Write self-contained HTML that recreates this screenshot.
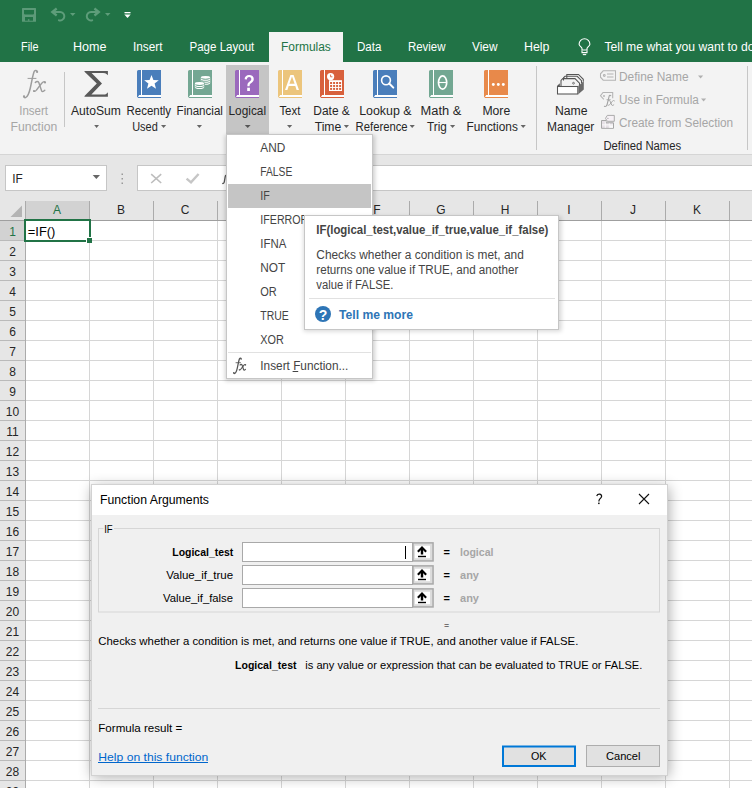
<!DOCTYPE html>
<html><head><meta charset="utf-8"><title>Excel</title>
<style>html,body{margin:0;padding:0;width:752px;height:788px;overflow:hidden;background:#fff}svg{display:block}text{white-space:pre}</style>
</head><body>
<svg width="752" height="788" viewBox="0 0 752 788" font-family='"Liberation Sans", sans-serif'>
<rect x="0" y="0" width="752" height="788" fill="#ffffff" />
<rect x="0" y="0" width="752" height="62" fill="#217346" />
<rect x="22" y="8" width="14" height="13.7" rx="0.5" fill="#5c9a78"/>
<path d="M24 10H34V13.8L33.2 14.6H24.8L24 13.8Z" fill="#217346"/>
<rect x="25" y="17" width="8" height="3.7" fill="#217346"/>
<rect x="27.9" y="19.2" width="1.5" height="1.6" fill="#5c9a78"/>
<g fill="none" stroke="#5e9d7a" stroke-width="2"><path d="M53 11.9H60A4.3 4.3 0 1 1 58.9 20.35" stroke-linecap="round"/><path d="M56.7 8.5L52.3 12L56.7 15.5" stroke-width="2.3"/></g>
<path d="M70 13H75.5L72.75 16Z" fill="#5e9d7a"/>
<g fill="none" stroke="#5e9d7a" stroke-width="2"><path d="M98.1 11.9H91.1A4.3 4.3 0 1 0 92.2 20.35" stroke-linecap="round"/><path d="M94.4 8.5L98.8 12L94.4 15.5" stroke-width="2.3"/></g>
<path d="M105 13H110.5L107.75 16Z" fill="#5e9d7a"/>
<rect x="124.5" y="12" width="6" height="1.3" fill="#ffffff" />
<path d="M124.3 14.5H130.7L127.5 18Z" fill="#ffffff"/>
<rect x="269" y="32" width="74" height="30" fill="#f3f3f3" />
<text x="21" y="51" font-size="12" font-weight="normal" fill="#ffffff" textLength="17.5" lengthAdjust="spacingAndGlyphs" >File</text>
<text x="73" y="51" font-size="12" font-weight="normal" fill="#ffffff" textLength="33.5" lengthAdjust="spacingAndGlyphs" >Home</text>
<text x="133" y="51" font-size="12" font-weight="normal" fill="#ffffff" textLength="29.5" lengthAdjust="spacingAndGlyphs" >Insert</text>
<text x="189.5" y="51" font-size="12" font-weight="normal" fill="#ffffff" textLength="64.8" lengthAdjust="spacingAndGlyphs" >Page Layout</text>
<text x="357" y="51" font-size="12" font-weight="normal" fill="#ffffff" textLength="24.5" lengthAdjust="spacingAndGlyphs" >Data</text>
<text x="408" y="51" font-size="12" font-weight="normal" fill="#ffffff" textLength="37.5" lengthAdjust="spacingAndGlyphs" >Review</text>
<text x="472" y="51" font-size="12" font-weight="normal" fill="#ffffff" textLength="25.5" lengthAdjust="spacingAndGlyphs" >View</text>
<text x="524" y="51" font-size="12" font-weight="normal" fill="#ffffff" textLength="25.5" lengthAdjust="spacingAndGlyphs" >Help</text>
<text x="281" y="51" font-size="12" font-weight="normal" fill="#217346" textLength="49.8" lengthAdjust="spacingAndGlyphs" >Formulas</text>
<g fill="none" stroke="#ffffff" stroke-width="1.1"><path d="M582 50V48.6C582 47 579.1 46.2 579.1 44.2A5.4 5.4 0 1 1 589.9 44.2C589.9 46.2 587 47 587 48.6V50Z"/><path d="M582 50.5V52.6H587V50.5"/><path d="M582.8 54.6H586.2"/></g>
<text x="604.5" y="51" font-size="12" font-weight="normal" fill="#ffffff" textLength="150" lengthAdjust="spacingAndGlyphs" >Tell me what you want to do</text>
<rect x="0" y="62" width="752" height="92" fill="#f3f3f3" />
<rect x="0" y="154" width="752" height="1" fill="#d5d5d5" />
<rect x="0" y="155" width="752" height="46" fill="#e6e6e6" />
<g transform="translate(23,70) scale(1)" fill="none" stroke="#9c9c9c" stroke-linecap="round"><path d="M14.2 1.4C13.8 0.2 12.2 0 11.4 1.2C10 3.5 8.5 13 7.3 18C6.3 22.5 5 26.8 2.5 27.6C1.5 27.9 0.8 27.2 1 26.5" stroke-width="1.5"/><path d="M5 8.4H13" stroke-width="1.0"/><path d="M12.3 12.5C13.5 11.2 15 11 15.8 12.5L18.5 20.5C19 22 20.2 22 21.8 20.3" stroke-width="1.4"/><path d="M22.2 12C21 11.2 19.8 12 18.5 13.5L13.5 20C12.5 21.5 11.8 21.8 10.9 21.2" stroke-width="1.3"/><circle cx="14.1" cy="1.9" r="1.1" fill="#9c9c9c" stroke="none"/><circle cx="1" cy="26.3" r="1.1" fill="#9c9c9c" stroke="none"/><circle cx="22" cy="12.5" r="1.1" fill="#9c9c9c" stroke="none"/><circle cx="11" cy="21" r="1.0" fill="#9c9c9c" stroke="none"/></g>
<text x="19.2" y="115" font-size="12" font-weight="normal" fill="#a6a6a6" textLength="28.8" lengthAdjust="spacingAndGlyphs" >Insert</text>
<text x="10.5" y="131" font-size="12" font-weight="normal" fill="#a6a6a6" textLength="46.8" lengthAdjust="spacingAndGlyphs" >Function</text>
<rect x="64" y="72" width="1" height="55" fill="#c6c6c6" />
<path d="M84.5 71.1H107.9V75.3L106.8 74.2Q105.5 73.1 103 73.1H91.6L102 83.5L91.4 94.6H103Q105.5 94.6 106.8 93.4L107.9 92.3V96.7H84.5V96L96.8 83.5L84.5 71.8Z" fill="#595959"/>
<text x="71" y="115" font-size="12" font-weight="normal" fill="#262626" textLength="49.8" lengthAdjust="spacingAndGlyphs" >AutoSum</text>
<path d="M94.2 125H99L96.6 128Z" fill="#666"/>
<g transform="translate(137,70)"><path d="M1.5 0H24V28H1.2L0 26.8V1.5A1.5 1.5 0 0 1 1.5 0Z" fill="#4a7ebb"/><rect x="4" y="0" width="1" height="25.5" fill="#fff"/><path d="M2.2 25H24V27H0.9Z" fill="#fff"/><path d="M14.50 4.90L16.41 9.97L21.82 10.22L17.59 13.60L19.03 18.83L14.50 15.85L9.97 18.83L11.41 13.60L7.18 10.22L12.59 9.97Z" fill="#fff"/></g>
<text x="126.5" y="115" font-size="12" font-weight="normal" fill="#262626" textLength="44.6" lengthAdjust="spacingAndGlyphs" >Recently</text>
<text x="132.2" y="131" font-size="12" font-weight="normal" fill="#262626" textLength="25.6" lengthAdjust="spacingAndGlyphs" >Used</text>
<path d="M161 125H166.2L163.6 128Z" fill="#666"/>
<g transform="translate(188,70)"><path d="M1.5 0H24V28H1.2L0 26.8V1.5A1.5 1.5 0 0 1 1.5 0Z" fill="#74a793"/><rect x="4" y="0" width="1" height="25.5" fill="#fff"/><path d="M2.2 25H24V27H0.9Z" fill="#fff"/><rect x="12.1" y="5.1" width="10.8" height="10.6" rx="3" fill="#74a793"/><path d="M13.4 13.049999999999999A4.1 1.25 0 0 0 21.6 13.049999999999999" fill="none" stroke="#fff" stroke-width="1.1"/><path d="M13.4 11.049999999999999A4.1 1.25 0 0 0 21.6 11.049999999999999" fill="none" stroke="#fff" stroke-width="1.1"/><path d="M13.4 9.049999999999999A4.1 1.25 0 0 0 21.6 9.049999999999999" fill="none" stroke="#fff" stroke-width="1.1"/><ellipse cx="17.5" cy="7.35" rx="4.6" ry="1.45" fill="#fff"/><path d="M13.1 7.5V13.15M21.9 7.5V13.15" stroke="#fff" stroke-width="0.7" opacity="0.6"/><rect x="6.1" y="11.299999999999999" width="10.8" height="8.6" rx="3" fill="#74a793"/><path d="M7.4 17.249999999999996A4.1 1.25 0 0 0 15.6 17.249999999999996" fill="none" stroke="#fff" stroke-width="1.1"/><path d="M7.4 15.249999999999998A4.1 1.25 0 0 0 15.6 15.249999999999998" fill="none" stroke="#fff" stroke-width="1.1"/><ellipse cx="11.5" cy="13.549999999999999" rx="4.6" ry="1.45" fill="#fff"/><path d="M7.1 13.7V17.349999999999998M15.9 13.7V17.349999999999998" stroke="#fff" stroke-width="0.7" opacity="0.6"/></g>
<text x="176.6" y="115" font-size="12" font-weight="normal" fill="#262626" textLength="46.3" lengthAdjust="spacingAndGlyphs" >Financial</text>
<path d="M196.8 125H202L199.4 128Z" fill="#666"/>
<rect x="226" y="65" width="43" height="69" fill="#c5c5c5" />
<g transform="translate(235,70)"><path d="M1.5 0H24V28H1.2L0 26.8V1.5A1.5 1.5 0 0 1 1.5 0Z" fill="#9b69bd"/><rect x="4" y="0" width="1" height="25.5" fill="#fff"/><path d="M2.2 25H24V27H0.9Z" fill="#fff"/><path d="M9.6 9.3C9.6 6.6 11.6 5 14.1 5C16.8 5 18.8 6.6 18.8 9C18.8 11.2 17.4 12.2 16 13.2C15 13.9 14.6 14.6 14.6 15.9V16.2H12.4V15.6C12.4 13.8 13 12.8 14.4 11.8C15.6 10.9 16.3 10.3 16.3 9.1C16.3 7.9 15.4 7.1 14.1 7.1C12.7 7.1 11.9 8 11.9 9.5Z" fill="#fff"/><rect x="12.2" y="17.7" width="2.7" height="3.3" fill="#fff"/></g>
<text x="228.5" y="115" font-size="12" font-weight="normal" fill="#262626" textLength="37.6" lengthAdjust="spacingAndGlyphs" >Logical</text>
<path d="M244.8 125H250.6L247.7 128Z" fill="#555"/>
<g transform="translate(278,70)"><path d="M1.5 0H24V28H1.2L0 26.8V1.5A1.5 1.5 0 0 1 1.5 0Z" fill="#ecc57c"/><rect x="4" y="0" width="1" height="25.5" fill="#fff"/><path d="M2.2 25H24V27H0.9Z" fill="#fff"/><path d="M7 20L12.4 5H15.6L21 20H18.6L17.3 16H10.7L9.4 20ZM11.4 13.7H16.6L14 6.6Z" fill="#fff" fill-rule="evenodd"/></g>
<text x="279.4" y="115" font-size="12" font-weight="normal" fill="#262626" textLength="21" lengthAdjust="spacingAndGlyphs" >Text</text>
<path d="M287 125H292.2L289.6 128Z" fill="#666"/>
<g transform="translate(320,70)"><path d="M1.5 0H24V28H1.2L0 26.8V1.5A1.5 1.5 0 0 1 1.5 0Z" fill="#d8603c"/><rect x="4" y="0" width="1" height="25.5" fill="#fff"/><path d="M2.2 25H24V27H0.9Z" fill="#fff"/><circle cx="10.6" cy="6.6" r="3.6" fill="#fff"/><path d="M10.6 4.6V6.8H12.4" stroke="#d8603c" stroke-width="0.9" fill="none"/><rect x="9" y="10.2" width="13" height="10.8" fill="#fff"/><rect x="10.1" y="12.0" width="2" height="2" fill="#d8603c"/><rect x="10.1" y="14.95" width="2" height="2" fill="#d8603c"/><rect x="10.1" y="17.9" width="2" height="2" fill="#d8603c"/><rect x="13.1" y="12.0" width="2" height="2" fill="#d8603c"/><rect x="13.1" y="14.95" width="2" height="2" fill="#d8603c"/><rect x="13.1" y="17.9" width="2" height="2" fill="#d8603c"/><rect x="16.1" y="12.0" width="2" height="2" fill="#d8603c"/><rect x="16.1" y="14.95" width="2" height="2" fill="#d8603c"/><rect x="16.1" y="17.9" width="2" height="2" fill="#d8603c"/><rect x="19.1" y="12.0" width="2" height="2" fill="#d8603c"/><rect x="19.1" y="14.95" width="2" height="2" fill="#d8603c"/><rect x="19.1" y="17.9" width="2" height="2" fill="#d8603c"/></g>
<text x="313.3" y="115" font-size="12" font-weight="normal" fill="#262626" textLength="36.5" lengthAdjust="spacingAndGlyphs" >Date &amp;</text>
<text x="314.7" y="131" font-size="12" font-weight="normal" fill="#262626" textLength="26.6" lengthAdjust="spacingAndGlyphs" >Time</text>
<path d="M343.8 125H349L346.4 128Z" fill="#666"/>
<g transform="translate(373,70)"><path d="M1.5 0H24V28H1.2L0 26.8V1.5A1.5 1.5 0 0 1 1.5 0Z" fill="#4a7ebb"/><rect x="4" y="0" width="1" height="25.5" fill="#fff"/><path d="M2.2 25H24V27H0.9Z" fill="#fff"/><circle cx="13" cy="10.3" r="4.4" fill="none" stroke="#fff" stroke-width="1.6"/><path d="M16.2 13.5L20.3 17.6" stroke="#fff" stroke-width="2" stroke-linecap="round"/></g>
<text x="359.2" y="115" font-size="12" font-weight="normal" fill="#262626" textLength="52.4" lengthAdjust="spacingAndGlyphs" >Lookup &amp;</text>
<text x="355.6" y="131" font-size="12" font-weight="normal" fill="#262626" textLength="52" lengthAdjust="spacingAndGlyphs" >Reference</text>
<path d="M409.6 125H414.8L412.20000000000005 128Z" fill="#666"/>
<g transform="translate(429,70)"><path d="M1.5 0H24V28H1.2L0 26.8V1.5A1.5 1.5 0 0 1 1.5 0Z" fill="#72a792"/><rect x="4" y="0" width="1" height="25.5" fill="#fff"/><path d="M2.2 25H24V27H0.9Z" fill="#fff"/><ellipse cx="13.6" cy="12.5" rx="4.1" ry="6.6" fill="none" stroke="#fff" stroke-width="1.7"/><path d="M9.8 12.5H17.4" stroke="#fff" stroke-width="1.1"/></g>
<text x="420.5" y="115" font-size="12" font-weight="normal" fill="#262626" textLength="40.8" lengthAdjust="spacingAndGlyphs" >Math &amp;</text>
<text x="427.1" y="131" font-size="12" font-weight="normal" fill="#262626" textLength="19.8" lengthAdjust="spacingAndGlyphs" >Trig</text>
<path d="M450 125H455.2L452.6 128Z" fill="#666"/>
<g transform="translate(484,70)"><path d="M1.5 0H24V28H1.2L0 26.8V1.5A1.5 1.5 0 0 1 1.5 0Z" fill="#e8894a"/><rect x="4" y="0" width="1" height="25.5" fill="#fff"/><path d="M2.2 25H24V27H0.9Z" fill="#fff"/><circle cx="9.3" cy="14.5" r="1.45" fill="#fff"/><circle cx="14.3" cy="14.5" r="1.45" fill="#fff"/><circle cx="19.3" cy="14.5" r="1.45" fill="#fff"/></g>
<text x="482.4" y="115" font-size="12" font-weight="normal" fill="#262626" textLength="27.8" lengthAdjust="spacingAndGlyphs" >More</text>
<text x="466.5" y="131" font-size="12" font-weight="normal" fill="#262626" textLength="51.3" lengthAdjust="spacingAndGlyphs" >Functions</text>
<path d="M520.6 125H525.8L523.2 128Z" fill="#666"/>
<rect x="536" y="66" width="1" height="84" fill="#c6c6c6" />
<g fill="none" stroke="#555" stroke-width="1.05"><path d="M566.8 78V74.5H578.5L583.3 79.3V81.5"/><path d="M563.5 80.5V77.8L565 76.3H577.2L581.5 80.6V83"/><path d="M561 86V80.5L562.8 78.6H575L579.5 83.1V86"/></g><rect x="557.5" y="86.5" width="20.3" height="7.5" fill="#fff" stroke="#555" stroke-width="1.05"/><path d="M578.3 86L583.8 81V89.5L578.3 94.3Z" fill="#6a6a6a"/><path d="M557 86L559.8 83.2V86Z" fill="#555"/><circle cx="573.5" cy="83.2" r="0.9" fill="none" stroke="#555" stroke-width="0.8"/>
<text x="555" y="115" font-size="12" font-weight="normal" fill="#262626" textLength="32.6" lengthAdjust="spacingAndGlyphs" >Name</text>
<text x="547" y="131" font-size="12" font-weight="normal" fill="#262626" textLength="47.3" lengthAdjust="spacingAndGlyphs" >Manager</text>
<g fill="none" stroke="#b4b4b4" stroke-width="1.05"><path d="M603.2 70.8H615.5V80.2H603.2L600.5 77.2V73.8Z"/><circle cx="604.3" cy="75.5" r="0.9"/><path d="M607 74H613.5M607 77H613.5"/><path d="M612.7 98.2V92.5H603L600.5 95.8L603.8 99.4"/></g>
<circle cx="604" cy="96" r="0.9" fill="#b0b0b0"/>
<g fill="none" stroke="#a3a3a3" stroke-linecap="round"><path d="M610.8 95.8C610.4 95 609.5 95.1 609.2 96L607.1 104.5C606.7 106 605.7 106.8 604.4 106.3" stroke-width="1.05"/><path d="M606.9 99.7H610.3" stroke-width="0.8"/><path d="M608.3 100.7C609 100.1 609.7 100.3 610 101L611.7 105C612 105.7 612.8 105.6 613.8 104.8" stroke-width="0.95"/><path d="M614.5 100.9C613.9 100.2 613.1 100.4 612.4 101.2L609.7 104.6C609.1 105.3 608.6 105.5 608.1 105.2" stroke-width="0.9"/></g>
<path d="M601.5 120.5H606V122.8H613.5V128.3H601.5Z" fill="#e6e0e6" stroke="#a6a6a6" stroke-width="1"/>
<g stroke="#fbfbfb" stroke-width="0.9"><path d="M605.3 121.2V127.8M609.3 123.3V127.8M602 124.9H613"/></g>
<rect x="609.8" y="125.4" width="3.2" height="2.4" fill="#fbfbfb"/>
<path d="M607.3 115.4H614.3V121.3H607.3L605.5 118.35Z" fill="#f6f1f6" stroke="#a6a6a6" stroke-width="0.95"/>
<circle cx="607.9" cy="118.35" r="0.7" fill="#a6a6a6"/>
<text x="619" y="81" font-size="12" font-weight="normal" fill="#a6a6a6" textLength="69.5" lengthAdjust="spacingAndGlyphs" >Define Name</text>
<path d="M698 75.5H703.2L700.6 78.5Z" fill="#b0b0b0"/>
<text x="619" y="104" font-size="12" font-weight="normal" fill="#a6a6a6" textLength="79.8" lengthAdjust="spacingAndGlyphs" >Use in Formula</text>
<path d="M701 98.5H706.2L703.6 101.5Z" fill="#b0b0b0"/>
<text x="619" y="127" font-size="12" font-weight="normal" fill="#a6a6a6" textLength="114.2" lengthAdjust="spacingAndGlyphs" >Create from Selection</text>
<text x="603.4" y="150" font-size="12" font-weight="normal" fill="#262626" textLength="77.8" lengthAdjust="spacingAndGlyphs" >Defined Names</text>
<rect x="747" y="66" width="1" height="84" fill="#c6c6c6" />
<rect x="5.5" y="165.5" width="101" height="25" fill="#fff" stroke="#c6c6c6" stroke-width="1"/>
<text x="12.3" y="183" font-size="12" font-weight="normal" fill="#262626" textLength="10.5" lengthAdjust="spacingAndGlyphs" >IF</text>
<path d="M92.7 175H100L96.35 179Z" fill="#666"/>
<rect x="121.5" y="173.5" width="1.5" height="1.5" fill="#999" />
<rect x="121.5" y="178" width="1.5" height="1.5" fill="#999" />
<rect x="121.5" y="182.5" width="1.5" height="1.5" fill="#999" />
<rect x="137.5" y="165.5" width="620" height="25" fill="#ffffff" stroke="#c6c6c6" stroke-width="1" shape-rendering="crispEdges"/>
<path d="M151.2 174.2L161.2 183M161.2 174.2L151.2 183" stroke="#bdbdbd" stroke-width="1.6"/>
<path d="M186.6 178.6L191 182.4L198.6 174" stroke="#c6c6c6" stroke-width="2.4" fill="none"/>
<path d="M226.8 175.8C226.3 175.1 225.5 175.3 225.2 176.6L224.3 181.8C224 183.2 223.1 183.9 222.3 183.3" stroke="#555" stroke-width="1.3" fill="none"/>
<rect x="0" y="201" width="752" height="19" fill="#e6e6e6" />
<rect x="25" y="201" width="64" height="19" fill="#d2d2d2" />
<path d="M10.5 217L22 205.5V217Z" fill="#b4b4b4"/>
<text x="57" y="214" font-size="12" font-weight="normal" fill="#217346" text-anchor="middle">A</text>
<text x="121" y="214" font-size="12" font-weight="normal" fill="#262626" text-anchor="middle">B</text>
<text x="185" y="214" font-size="12" font-weight="normal" fill="#262626" text-anchor="middle">C</text>
<text x="249" y="214" font-size="12" font-weight="normal" fill="#262626" text-anchor="middle">D</text>
<text x="313" y="214" font-size="12" font-weight="normal" fill="#262626" text-anchor="middle">E</text>
<text x="377" y="214" font-size="12" font-weight="normal" fill="#262626" text-anchor="middle">F</text>
<text x="441" y="214" font-size="12" font-weight="normal" fill="#262626" text-anchor="middle">G</text>
<text x="505" y="214" font-size="12" font-weight="normal" fill="#262626" text-anchor="middle">H</text>
<text x="569" y="214" font-size="12" font-weight="normal" fill="#262626" text-anchor="middle">I</text>
<text x="633" y="214" font-size="12" font-weight="normal" fill="#262626" text-anchor="middle">J</text>
<text x="697" y="214" font-size="12" font-weight="normal" fill="#262626" text-anchor="middle">K</text>
<rect x="25" y="201" width="1" height="19" fill="#ababab" />
<rect x="89" y="201" width="1" height="19" fill="#ababab" />
<rect x="153" y="201" width="1" height="19" fill="#ababab" />
<rect x="217" y="201" width="1" height="19" fill="#ababab" />
<rect x="281" y="201" width="1" height="19" fill="#ababab" />
<rect x="345" y="201" width="1" height="19" fill="#ababab" />
<rect x="409" y="201" width="1" height="19" fill="#ababab" />
<rect x="473" y="201" width="1" height="19" fill="#ababab" />
<rect x="537" y="201" width="1" height="19" fill="#ababab" />
<rect x="601" y="201" width="1" height="19" fill="#ababab" />
<rect x="665" y="201" width="1" height="19" fill="#ababab" />
<rect x="729" y="201" width="1" height="19" fill="#ababab" />
<rect x="0" y="220" width="752" height="1" fill="#9f9f9f" />
<rect x="0" y="221" width="25" height="567" fill="#e6e6e6" />
<rect x="0" y="221" width="25" height="19" fill="#d2d2d2" />
<rect x="25" y="221" width="1" height="567" fill="#ababab" />
<rect x="0" y="240" width="25" height="1" fill="#bababa" />
<rect x="26" y="240" width="726" height="1" fill="#d6d6d6" />
<text x="12.5" y="236" font-size="12" font-weight="normal" fill="#217346" text-anchor="middle">1</text>
<rect x="0" y="260" width="25" height="1" fill="#bababa" />
<rect x="26" y="260" width="726" height="1" fill="#d6d6d6" />
<text x="12.5" y="256" font-size="12" font-weight="normal" fill="#262626" text-anchor="middle">2</text>
<rect x="0" y="280" width="25" height="1" fill="#bababa" />
<rect x="26" y="280" width="726" height="1" fill="#d6d6d6" />
<text x="12.5" y="276" font-size="12" font-weight="normal" fill="#262626" text-anchor="middle">3</text>
<rect x="0" y="300" width="25" height="1" fill="#bababa" />
<rect x="26" y="300" width="726" height="1" fill="#d6d6d6" />
<text x="12.5" y="296" font-size="12" font-weight="normal" fill="#262626" text-anchor="middle">4</text>
<rect x="0" y="320" width="25" height="1" fill="#bababa" />
<rect x="26" y="320" width="726" height="1" fill="#d6d6d6" />
<text x="12.5" y="316" font-size="12" font-weight="normal" fill="#262626" text-anchor="middle">5</text>
<rect x="0" y="340" width="25" height="1" fill="#bababa" />
<rect x="26" y="340" width="726" height="1" fill="#d6d6d6" />
<text x="12.5" y="336" font-size="12" font-weight="normal" fill="#262626" text-anchor="middle">6</text>
<rect x="0" y="360" width="25" height="1" fill="#bababa" />
<rect x="26" y="360" width="726" height="1" fill="#d6d6d6" />
<text x="12.5" y="356" font-size="12" font-weight="normal" fill="#262626" text-anchor="middle">7</text>
<rect x="0" y="380" width="25" height="1" fill="#bababa" />
<rect x="26" y="380" width="726" height="1" fill="#d6d6d6" />
<text x="12.5" y="376" font-size="12" font-weight="normal" fill="#262626" text-anchor="middle">8</text>
<rect x="0" y="400" width="25" height="1" fill="#bababa" />
<rect x="26" y="400" width="726" height="1" fill="#d6d6d6" />
<text x="12.5" y="396" font-size="12" font-weight="normal" fill="#262626" text-anchor="middle">9</text>
<rect x="0" y="420" width="25" height="1" fill="#bababa" />
<rect x="26" y="420" width="726" height="1" fill="#d6d6d6" />
<text x="12.5" y="416" font-size="12" font-weight="normal" fill="#262626" text-anchor="middle">10</text>
<rect x="0" y="440" width="25" height="1" fill="#bababa" />
<rect x="26" y="440" width="726" height="1" fill="#d6d6d6" />
<text x="12.5" y="436" font-size="12" font-weight="normal" fill="#262626" text-anchor="middle">11</text>
<rect x="0" y="460" width="25" height="1" fill="#bababa" />
<rect x="26" y="460" width="726" height="1" fill="#d6d6d6" />
<text x="12.5" y="456" font-size="12" font-weight="normal" fill="#262626" text-anchor="middle">12</text>
<rect x="0" y="480" width="25" height="1" fill="#bababa" />
<rect x="26" y="480" width="726" height="1" fill="#d6d6d6" />
<text x="12.5" y="476" font-size="12" font-weight="normal" fill="#262626" text-anchor="middle">13</text>
<rect x="0" y="500" width="25" height="1" fill="#bababa" />
<rect x="26" y="500" width="726" height="1" fill="#d6d6d6" />
<text x="12.5" y="496" font-size="12" font-weight="normal" fill="#262626" text-anchor="middle">14</text>
<rect x="0" y="520" width="25" height="1" fill="#bababa" />
<rect x="26" y="520" width="726" height="1" fill="#d6d6d6" />
<text x="12.5" y="516" font-size="12" font-weight="normal" fill="#262626" text-anchor="middle">15</text>
<rect x="0" y="540" width="25" height="1" fill="#bababa" />
<rect x="26" y="540" width="726" height="1" fill="#d6d6d6" />
<text x="12.5" y="536" font-size="12" font-weight="normal" fill="#262626" text-anchor="middle">16</text>
<rect x="0" y="560" width="25" height="1" fill="#bababa" />
<rect x="26" y="560" width="726" height="1" fill="#d6d6d6" />
<text x="12.5" y="556" font-size="12" font-weight="normal" fill="#262626" text-anchor="middle">17</text>
<rect x="0" y="580" width="25" height="1" fill="#bababa" />
<rect x="26" y="580" width="726" height="1" fill="#d6d6d6" />
<text x="12.5" y="576" font-size="12" font-weight="normal" fill="#262626" text-anchor="middle">18</text>
<rect x="0" y="600" width="25" height="1" fill="#bababa" />
<rect x="26" y="600" width="726" height="1" fill="#d6d6d6" />
<text x="12.5" y="596" font-size="12" font-weight="normal" fill="#262626" text-anchor="middle">19</text>
<rect x="0" y="620" width="25" height="1" fill="#bababa" />
<rect x="26" y="620" width="726" height="1" fill="#d6d6d6" />
<text x="12.5" y="616" font-size="12" font-weight="normal" fill="#262626" text-anchor="middle">20</text>
<rect x="0" y="640" width="25" height="1" fill="#bababa" />
<rect x="26" y="640" width="726" height="1" fill="#d6d6d6" />
<text x="12.5" y="636" font-size="12" font-weight="normal" fill="#262626" text-anchor="middle">21</text>
<rect x="0" y="660" width="25" height="1" fill="#bababa" />
<rect x="26" y="660" width="726" height="1" fill="#d6d6d6" />
<text x="12.5" y="656" font-size="12" font-weight="normal" fill="#262626" text-anchor="middle">22</text>
<rect x="0" y="680" width="25" height="1" fill="#bababa" />
<rect x="26" y="680" width="726" height="1" fill="#d6d6d6" />
<text x="12.5" y="676" font-size="12" font-weight="normal" fill="#262626" text-anchor="middle">23</text>
<rect x="0" y="700" width="25" height="1" fill="#bababa" />
<rect x="26" y="700" width="726" height="1" fill="#d6d6d6" />
<text x="12.5" y="696" font-size="12" font-weight="normal" fill="#262626" text-anchor="middle">24</text>
<rect x="0" y="720" width="25" height="1" fill="#bababa" />
<rect x="26" y="720" width="726" height="1" fill="#d6d6d6" />
<text x="12.5" y="716" font-size="12" font-weight="normal" fill="#262626" text-anchor="middle">25</text>
<rect x="0" y="740" width="25" height="1" fill="#bababa" />
<rect x="26" y="740" width="726" height="1" fill="#d6d6d6" />
<text x="12.5" y="736" font-size="12" font-weight="normal" fill="#262626" text-anchor="middle">26</text>
<rect x="0" y="760" width="25" height="1" fill="#bababa" />
<rect x="26" y="760" width="726" height="1" fill="#d6d6d6" />
<text x="12.5" y="756" font-size="12" font-weight="normal" fill="#262626" text-anchor="middle">27</text>
<rect x="0" y="780" width="25" height="1" fill="#bababa" />
<rect x="26" y="780" width="726" height="1" fill="#d6d6d6" />
<text x="12.5" y="776" font-size="12" font-weight="normal" fill="#262626" text-anchor="middle">28</text>
<text x="12.5" y="796" font-size="12" font-weight="normal" fill="#262626" text-anchor="middle">29</text>
<rect x="89" y="221" width="1" height="567" fill="#d6d6d6" />
<rect x="153" y="221" width="1" height="567" fill="#d6d6d6" />
<rect x="217" y="221" width="1" height="567" fill="#d6d6d6" />
<rect x="281" y="221" width="1" height="567" fill="#d6d6d6" />
<rect x="345" y="221" width="1" height="567" fill="#d6d6d6" />
<rect x="409" y="221" width="1" height="567" fill="#d6d6d6" />
<rect x="473" y="221" width="1" height="567" fill="#d6d6d6" />
<rect x="537" y="221" width="1" height="567" fill="#d6d6d6" />
<rect x="601" y="221" width="1" height="567" fill="#d6d6d6" />
<rect x="665" y="221" width="1" height="567" fill="#d6d6d6" />
<rect x="729" y="221" width="1" height="567" fill="#d6d6d6" />
<text x="27.8" y="236" font-size="12.5" font-weight="normal" fill="#000" textLength="27.6" lengthAdjust="spacingAndGlyphs" >=IF()</text>
<rect x="25" y="220" width="65" height="21" fill="none" stroke="#217346" stroke-width="2"/>
<rect x="86" y="237" width="6" height="6" fill="#ffffff" />
<rect x="87" y="238" width="5" height="5" fill="#217346" />
<defs><filter id="dsh" x="-20%" y="-20%" width="140%" height="140%"><feGaussianBlur stdDeviation="2"/></filter></defs>
<rect x="225" y="135" width="150" height="246" fill="#000" opacity="0.18" filter="url(#dsh)"/>
<rect x="226.5" y="134.5" width="146" height="244" fill="#ffffff" stroke="#c6c6c6" stroke-width="1"/>
<rect x="228" y="184" width="143" height="24" fill="#c5c5c5" />
<text x="260.3" y="152" font-size="12" font-weight="normal" fill="#444444" textLength="25" lengthAdjust="spacingAndGlyphs" >AND</text>
<text x="260.3" y="176" font-size="12" font-weight="normal" fill="#444444" textLength="32" lengthAdjust="spacingAndGlyphs" >FALSE</text>
<text x="260.3" y="200" font-size="12" font-weight="normal" fill="#444444" textLength="9.5" lengthAdjust="spacingAndGlyphs" >IF</text>
<text x="260.3" y="224" font-size="12" font-weight="normal" fill="#444444" textLength="48" lengthAdjust="spacingAndGlyphs" >IFERROR</text>
<text x="260.3" y="248" font-size="12" font-weight="normal" fill="#444444" textLength="26" lengthAdjust="spacingAndGlyphs" >IFNA</text>
<text x="260.3" y="272" font-size="12" font-weight="normal" fill="#444444" textLength="25" lengthAdjust="spacingAndGlyphs" >NOT</text>
<text x="260.3" y="296" font-size="12" font-weight="normal" fill="#444444" textLength="16.5" lengthAdjust="spacingAndGlyphs" >OR</text>
<text x="260.3" y="320" font-size="12" font-weight="normal" fill="#444444" textLength="28.5" lengthAdjust="spacingAndGlyphs" >TRUE</text>
<text x="260.3" y="344" font-size="12" font-weight="normal" fill="#444444" textLength="23.5" lengthAdjust="spacingAndGlyphs" >XOR</text>
<rect x="228" y="352" width="143" height="1" fill="#e1e1e1" />
<g transform="translate(233.2,358) scale(0.56)" fill="none" stroke="#555555" stroke-linecap="round"><path d="M14.2 1.4C13.8 0.2 12.2 0 11.4 1.2C10 3.5 8.5 13 7.3 18C6.3 22.5 5 26.8 2.5 27.6C1.5 27.9 0.8 27.2 1 26.5" stroke-width="2.25"/><path d="M5 8.4H13" stroke-width="1.5"/><path d="M12.3 12.5C13.5 11.2 15 11 15.8 12.5L18.5 20.5C19 22 20.2 22 21.8 20.3" stroke-width="2.0999999999999996"/><path d="M22.2 12C21 11.2 19.8 12 18.5 13.5L13.5 20C12.5 21.5 11.8 21.8 10.9 21.2" stroke-width="1.9500000000000002"/><circle cx="14.1" cy="1.9" r="1.1" fill="#555555" stroke="none"/><circle cx="1" cy="26.3" r="1.1" fill="#555555" stroke="none"/><circle cx="22" cy="12.5" r="1.1" fill="#555555" stroke="none"/><circle cx="11" cy="21" r="1.0" fill="#555555" stroke="none"/></g>
<text x="260.3" y="370" font-size="12" font-weight="normal" fill="#444444" textLength="88" lengthAdjust="spacingAndGlyphs" >Insert Function...</text>
<rect x="292.6" y="371" width="5.6" height="1" fill="#444444" />
<rect x="303.5" y="216.5" width="258" height="115" fill="#000" opacity="0.15" filter="url(#dsh)"/>
<rect x="304.5" y="215.5" width="254" height="114" fill="#ffffff" stroke="#c6c6c6" stroke-width="1"/>
<text x="316.3" y="234" font-size="12" font-weight="bold" fill="#444444" textLength="232" lengthAdjust="spacingAndGlyphs" >IF(logical_test,value_if_true,value_if_false)</text>
<text x="316.3" y="259" font-size="12" font-weight="normal" fill="#444444" textLength="207.5" lengthAdjust="spacingAndGlyphs" >Checks whether a condition is met, and</text>
<text x="316.3" y="274" font-size="12" font-weight="normal" fill="#444444" textLength="202" lengthAdjust="spacingAndGlyphs" >returns one value if TRUE, and another</text>
<text x="316.3" y="289" font-size="12" font-weight="normal" fill="#444444" textLength="77" lengthAdjust="spacingAndGlyphs" >value if FALSE.</text>
<rect x="309" y="298" width="246" height="1" fill="#e1e1e1" />
<circle cx="323" cy="314" r="8" fill="#2e75b6"/>
<text x="323" y="319.5" font-size="14" font-weight="bold" fill="#fff" text-anchor="middle">?</text>
<text x="339" y="319" font-size="12" font-weight="bold" fill="#2e75b6" textLength="74" lengthAdjust="spacingAndGlyphs" >Tell me more</text>
<defs><filter id="sh" x="-20%" y="-30%" width="140%" height="160%"><feGaussianBlur stdDeviation="7"/></filter></defs>
<rect x="92" y="487" width="577" height="290" fill="#000" opacity="0.33" filter="url(#sh)"/>
<rect x="91" y="484" width="577" height="292" fill="#d2d2d2" />
<rect x="92" y="485" width="575" height="290" fill="#f0f0f0" />
<rect x="92" y="485" width="575" height="30" fill="#ffffff" />
<text x="100" y="504" font-size="12" font-weight="normal" fill="#000" textLength="109" lengthAdjust="spacingAndGlyphs" >Function Arguments</text>
<path d="M596.7 495.9C597.3 494.5 598.4 494 599.5 494.1C600.9 494.3 601.7 495.2 601.6 496.5C601.4 497.7 600.5 498.3 599.7 499.1C599.1 499.7 598.9 500.3 598.9 501.4" stroke="#111" stroke-width="1.25" fill="none"/>
<rect x="598.1" y="502.6" width="1.5" height="1.5" fill="#111"/>
<path d="M639 494L649 504M649 494L639 504" stroke="#111" stroke-width="1.1"/>
<rect x="98.5" y="528.5" width="561" height="83.5" fill="none" stroke="#d6d6d6" stroke-width="1"/>
<rect x="103.5" y="522" width="10.5" height="12" fill="#f0f0f0" />
<text x="104.2" y="533" font-size="11" font-weight="normal" fill="#000" textLength="8.5" lengthAdjust="spacingAndGlyphs" >IF</text>
<text x="172.3" y="556" font-size="11" font-weight="bold" fill="#000" textLength="61" lengthAdjust="spacingAndGlyphs" >Logical_test</text>
<rect x="242.5" y="542.5" width="170" height="19" fill="#fff" stroke="#a9a9a9" stroke-width="1"/>
<rect x="412.2" y="542.1" width="21.6" height="19.6" fill="#a9a9a9" />
<rect x="413.7" y="543.6" width="18.6" height="16.6" fill="#dcdcdc" />
<rect x="414.9" y="545.7" width="15.1" height="12.5" fill="#ffffff" />
<path d="M418.6 551L422 547.6L425.4 551" stroke="#000" stroke-width="2.1" fill="none" stroke-linecap="square"/>
<path d="M422 548.5V554.5" stroke="#000" stroke-width="2.4"/>
<rect x="418" y="555.8" width="8" height="1.4" fill="#000" />
<text x="443.5" y="556" font-size="11" font-weight="bold" fill="#000" >=</text>
<text x="460" y="556" font-size="11.5" font-weight="bold" fill="#a6a6a6" textLength="33.5" lengthAdjust="spacingAndGlyphs" >logical</text>
<text x="166.2" y="579" font-size="11" font-weight="normal" fill="#000" textLength="67" lengthAdjust="spacingAndGlyphs" >Value_if_true</text>
<rect x="242.5" y="565.5" width="170" height="19" fill="#fff" stroke="#a9a9a9" stroke-width="1"/>
<rect x="412.2" y="565.1" width="21.6" height="19.6" fill="#a9a9a9" />
<rect x="413.7" y="566.6" width="18.6" height="16.6" fill="#dcdcdc" />
<rect x="414.9" y="568.7" width="15.1" height="12.5" fill="#ffffff" />
<path d="M418.6 574L422 570.6L425.4 574" stroke="#000" stroke-width="2.1" fill="none" stroke-linecap="square"/>
<path d="M422 571.5V577.5" stroke="#000" stroke-width="2.4"/>
<rect x="418" y="578.8" width="8" height="1.4" fill="#000" />
<text x="443.5" y="579" font-size="11" font-weight="bold" fill="#000" >=</text>
<text x="460" y="579" font-size="11.5" font-weight="bold" fill="#a6a6a6" textLength="19" lengthAdjust="spacingAndGlyphs" >any</text>
<text x="163" y="602" font-size="11" font-weight="normal" fill="#000" textLength="70" lengthAdjust="spacingAndGlyphs" >Value_if_false</text>
<rect x="242.5" y="588.5" width="170" height="19" fill="#fff" stroke="#a9a9a9" stroke-width="1"/>
<rect x="412.2" y="588.1" width="21.6" height="19.6" fill="#a9a9a9" />
<rect x="413.7" y="589.6" width="18.6" height="16.6" fill="#dcdcdc" />
<rect x="414.9" y="591.7" width="15.1" height="12.5" fill="#ffffff" />
<path d="M418.6 597L422 593.6L425.4 597" stroke="#000" stroke-width="2.1" fill="none" stroke-linecap="square"/>
<path d="M422 594.5V600.5" stroke="#000" stroke-width="2.4"/>
<rect x="418" y="601.8" width="8" height="1.4" fill="#000" />
<text x="443.5" y="602" font-size="11" font-weight="bold" fill="#000" >=</text>
<text x="460" y="602" font-size="11.5" font-weight="bold" fill="#a6a6a6" textLength="19" lengthAdjust="spacingAndGlyphs" >any</text>
<rect x="405" y="546" width="1" height="13" fill="#000" />
<text x="444" y="628" font-size="9" font-weight="normal" fill="#000" >=</text>
<text x="98.3" y="645" font-size="11" font-weight="normal" fill="#000" textLength="480" lengthAdjust="spacingAndGlyphs" >Checks whether a condition is met, and returns one value if TRUE, and another value if FALSE.</text>
<text x="235" y="669" font-size="11" font-weight="bold" fill="#000" textLength="61.5" lengthAdjust="spacingAndGlyphs" >Logical_test</text>
<text x="305.3" y="669" font-size="11" font-weight="normal" fill="#000" textLength="337" lengthAdjust="spacingAndGlyphs" >is any value or expression that can be evaluated to TRUE or FALSE.</text>
<rect x="98" y="708" width="562" height="1" fill="#d6d6d6" />
<text x="98.3" y="732" font-size="11" font-weight="normal" fill="#000" textLength="84" lengthAdjust="spacingAndGlyphs" >Formula result =</text>
<text x="98.3" y="761" font-size="11" font-weight="normal" fill="#0066cc" textLength="110" lengthAdjust="spacingAndGlyphs" >Help on this function</text>
<rect x="98" y="762" width="110" height="1" fill="#0066cc" />
<rect x="503" y="746.5" width="72" height="19.5" fill="#e1e1e1" stroke="#0078d7" stroke-width="2"/>
<text x="531" y="760" font-size="11" font-weight="normal" fill="#000" textLength="15.5" lengthAdjust="spacingAndGlyphs" >OK</text>
<rect x="586.5" y="745.5" width="73" height="21" fill="#e1e1e1" stroke="#adadad" stroke-width="1"/>
<text x="606" y="760" font-size="11" font-weight="normal" fill="#000" textLength="34.5" lengthAdjust="spacingAndGlyphs" >Cancel</text>
</svg>

</body></html>
